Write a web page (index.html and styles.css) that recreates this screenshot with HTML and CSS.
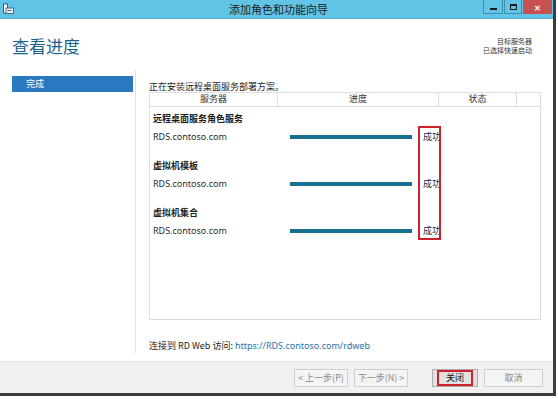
FILE: index.html
```html
<!DOCTYPE html>
<html lang="zh-CN">
<head>
  <meta charset="UTF-8">
  <title>添加角色和功能向导</title>
  <link rel="stylesheet" href="styles.css">
</head>
<body>
  <div class="window">
    <!-- Barra de título -->
    <div class="titlebar">
      <svg class="app-icon" width="11" height="11" viewBox="0 0 11 11">
        <rect x="0.5" y="1" width="4" height="9" fill="#ffffff" stroke="#2b5f86" stroke-width="1"/>
        <rect x="3" y="5" width="7.5" height="5.5" fill="#e8eef4" stroke="#4a6b88" stroke-width="1"/>
        <rect x="4.5" y="7" width="4" height="1" fill="#4a6b88"/>
      </svg>
      <div class="title">添加角色和功能向导</div>
      <div class="controls">
        <div class="ctl ctl-min"><span class="min-bar"></span></div>
        <div class="ctl ctl-max"><span class="max-box"></span></div>
        <div class="ctl ctl-close">✕</div>
      </div>
    </div>

    <!-- Cabeçalho -->
    <div class="header">
      <h1>查看进度</h1>
      <div class="target">
        <div>目标服务器</div>
        <div>已选择快速启动</div>
      </div>
    </div>

    <div class="main">
      <div class="nav">
        <div class="nav-item active">完成</div>
      </div>

      <div class="content">
        <p class="intro">正在安装远程桌面服务部署方案。</p>
        <div class="table">
          <div class="thead">
            <div class="th">服务器</div>
            <div class="th">进度</div>
            <div class="th">状态</div>
            <div class="th"></div>
          </div>
          <div class="tbody">
            <div class="group">
              <div class="group-title">远程桌面服务角色服务</div>
              <div class="row">
                <div class="cell">RDS.contoso.com</div>
                <div class="cell"><div class="bar"></div></div>
                <div class="cell status">成功</div>
              </div>
            </div>
            <div class="group">
              <div class="group-title">虚拟机模板</div>
              <div class="row">
                <div class="cell">RDS.contoso.com</div>
                <div class="cell"><div class="bar"></div></div>
                <div class="cell status">成功</div>
              </div>
            </div>
            <div class="group">
              <div class="group-title">虚拟机集合</div>
              <div class="row">
                <div class="cell">RDS.contoso.com</div>
                <div class="cell"><div class="bar"></div></div>
                <div class="cell status">成功</div>
              </div>
            </div>
            <!-- Marcação vermelha -->
            <div class="mark mark-status"></div>
          </div>
        </div>
        <p class="web">连接到 RD Web 访问: <a href="#">https://RDS.contoso.com/rdweb</a></p>
      </div>
    </div>

    <!-- Botões -->
    <div class="footer">
      <button class="btn disabled">&lt; 上一步(P)</button>
      <button class="btn disabled">下一步(N) &gt;</button>
      <button class="btn primary"><span class="mark-btn">关闭</span></button>
      <button class="btn disabled">取消</button>
    </div>
  </div>
</body>
</html>
```

FILE: styles.css
```css
/* Estilo base */
body {
  margin: 0;
  background: #ffffff;
  font-family: "Noto Sans", "Noto Sans CJK SC", sans-serif;
  font-size: 9px;
  color: #1e1e1e;
}

.window {
  width: 553px;
  height: 393px;
  display: flex;
  flex-direction: column;
  border-right: 3px solid #3c3c3c;
  border-bottom: 3px solid #3c3c3c;
  background: #ffffff;
}

/* Barra de título */
.titlebar {
  height: 18px;
  flex: none;
  display: flex;
  align-items: flex-start;
  background: #61c4e6;
  border-bottom: 1px solid #4fb0d4;
}

.app-icon {
  margin: 3px 0 0 3px;
}

.title {
  flex: 1;
  text-align: center;
  font-family: "Noto Sans CJK SC", sans-serif;
  font-size: 11px;
  line-height: 18px;
  color: #1b1b1b;
  padding-left: 60px;
}

.controls {
  display: flex;
}

.ctl {
  height: 14px;
  display: flex;
  align-items: center;
  justify-content: center;
  box-sizing: border-box;
}

.ctl-min {
  width: 20px;
  border: 1px solid #3c8fb0;
  border-top: none;
  margin-right: 1px;
}

.ctl-max {
  width: 18px;
  border: 1px solid #3c8fb0;
  border-top: none;
  margin-right: 1px;
}

.ctl-close {
  width: 29px;
  background: #c75050;
  color: #ffffff;
  font-size: 8px;
  font-weight: bold;
  margin-right: 1px;
}

.min-bar {
  width: 7px;
  height: 2px;
  margin-top: 4px;
  background: #1a1a1a;
}

.max-box {
  width: 5px;
  height: 3px;
  border: 1px solid #1a1a1a;
  border-top-width: 2px;
}

/* Cabeçalho */
.header {
  height: 51px;
  flex: none;
  display: flex;
  justify-content: space-between;
}

.header h1 {
  margin: 16px 0 0 12px;
  font-family: "Noto Sans CJK SC", sans-serif;
  font-size: 17px;
  font-weight: normal;
  line-height: 22px;
  color: #1d5f8c;
}

.target {
  margin: 18px 21px 0 0;
  text-align: right;
  font-family: "Noto Sans CJK SC", sans-serif;
  font-size: 7px;
  line-height: 9px;
  color: #333333;
}

/* Conteúdo */
.main {
  flex: 1;
  display: flex;
}

.nav {
  width: 136px;
  flex: none;
  box-sizing: border-box;
  padding: 6px 0 0 12px;
  border-right: 1px solid #e3e3e3;
  margin-bottom: 8px;
}

.nav-item {
  height: 16px;
  width: 121px;
  line-height: 16px;
  padding-left: 14px;
  box-sizing: border-box;
  font-family: "Noto Sans CJK SC", sans-serif;
}

.nav-item.active {
  background: #2a78bf;
  color: #ffffff;
}

.content {
  flex: 1;
  padding-left: 13px;
}

.intro {
  margin: 11px 0 0 0;
  line-height: 11px;
  font-family: "Noto Sans CJK SC", sans-serif;
}

.table {
  width: 392px;
  height: 228px;
  box-sizing: border-box;
  border: 1px solid #dedede;
  display: flex;
  flex-direction: column;
}

.thead {
  display: grid;
  grid-template-columns: 128px 161px 78px 1fr;
  height: 13px;
  border-bottom: 1px solid #dedede;
}

.th {
  text-align: center;
  line-height: 12px;
  font-family: "Noto Sans CJK SC", sans-serif;
  border-right: 1px solid #dedede;
  color: #333333;
}

.th:last-child {
  border-right: none;
}

.tbody {
  position: relative;
  padding-top: 5px;
}

.group {
  height: 47px;
}

.group-title {
  padding-left: 3px;
  line-height: 14px;
  font-weight: bold;
  font-family: "Noto Sans CJK SC", sans-serif;
}

.row {
  display: grid;
  grid-template-columns: 128px 161px 78px;
  margin-top: 4px;
  height: 14px;
  align-items: center;
}

.cell {
  padding-left: 3px;
  line-height: 14px;
  color: #2a2a2a;
}

.cell .bar {
  margin-left: 9px;
  width: 122px;
  height: 4px;
  background: #17708f;
}

.cell.status {
  padding-left: 0;
  margin-left: -16px;
  font-family: "Noto Sans CJK SC", sans-serif;
}

.mark {
  position: absolute;
  border: 2px solid #d0202e;
}

.mark-status {
  left: 268px;
  top: 19px;
  width: 19px;
  height: 110px;
}

.web {
  margin: 20px 0 0 0;
  line-height: 11px;
  font-family: "Noto Sans CJK SC", sans-serif;
}

.web a {
  color: #2674a8;
  text-decoration: none;
  font-family: "Noto Sans", sans-serif;
}

/* Botões */
.footer {
  height: 31px;
  flex: none;
  display: flex;
  align-items: center;
  padding-left: 294px;
  background: #f0f0f0;
  border-top: 1px solid #e4e4e4;
}

.btn {
  height: 18px;
  width: 54px;
  padding: 0;
  margin-right: 6px;
  font-family: "Noto Sans CJK SC", sans-serif;
  font-size: 9px;
  border: 1px solid #cfcfcf;
  background: #f4f4f4;
  color: #8a8a8a;
}

.btn.primary {
  width: 46px;
  margin-left: 18px;
  margin-right: 6px;
  background: #e1e1e1;
  border-color: #acacac;
  color: #111111;
  display: flex;
  align-items: center;
  justify-content: center;
}

.btn.disabled:last-child {
  width: 59px;
}

.mark-btn {
  display: block;
  width: 36px;
  height: 16px;
  line-height: 12px;
  text-align: center;
  box-sizing: border-box;
  border: 2px solid #d0202e;
}
```
